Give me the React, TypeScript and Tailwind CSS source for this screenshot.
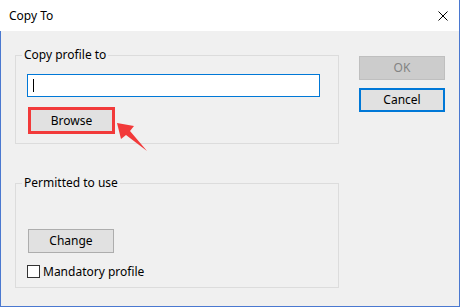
import React from "react";

export default function App() {
  return (
    <div
      className="relative w-[460px] h-[307px] bg-[#f0f0f0] flex flex-col border-r border-b border-[#4a78d0] text-[12px] text-black"
      style={{ fontFamily: '"Noto Sans", "Liberation Sans", sans-serif' }}
    >
      <div className="h-[31px] bg-white flex items-center justify-between pl-[9px] pr-[11px] shrink-0">
        <span className="leading-[16px]">Copy To</span>
        <svg width="10" height="10" viewBox="0 0 10 10">
          <path d="M0.5 0.5 L9.5 9.5 M9.5 0.5 L0.5 9.5" stroke="#000" strokeWidth="1" fill="none" />
        </svg>
      </div>
      <div className="flex-1 flex border-l border-[#4a78d0] pl-[14px] pt-[16px]">
        <div className="w-[324px] flex flex-col">
          <fieldset className="border border-[#dcdcdc] m-0 p-0">
            <legend className="ml-[6px] px-[2px] leading-[16px]">Copy profile to</legend>
            <div className="pl-[11px] pb-[9px] flex flex-col items-start">
              <div className="mt-[11px] w-[293px] h-[23px] border border-[#0078d7] bg-white flex items-center">
                <span className="ml-[5px] w-px h-[13px] bg-black" />
              </div>
              <button className="mt-[10px] ml-[1px] w-[87px] h-[27px] border-[3px] border-[#f23a3a] bg-[#e1e1e1] flex items-center justify-center leading-[16px]">
                Browse
              </button>
            </div>
          </fieldset>
          <fieldset className="mt-[31px] border border-[#dcdcdc] m-0 p-0">
            <legend className="ml-[6px] px-[2px] leading-[16px]">Permitted to use</legend>
            <div className="pl-[11px] pb-[9px] flex flex-col items-start">
              <button className="mt-[38px] ml-[1px] w-[86px] h-[24px] border border-[#adadad] bg-[#e1e1e1] flex items-center justify-center leading-[16px]">
                Change
              </button>
              <label className="mt-[12px] h-[13px] flex items-center">
                <span className="w-[13px] h-[13px] border border-[#333333] bg-white shrink-0" />
                <span className="ml-[3px] leading-[13px]">Mandatory profile</span>
              </label>
            </div>
          </fieldset>
        </div>
        <div className="ml-[20px] mt-[9px] flex flex-col gap-[8px]">
          <button className="w-[86px] h-[24px] border border-[#bfbfbf] bg-[#cccccc] text-[#838383] flex items-center justify-center leading-[16px]">
            OK
          </button>
          <button className="w-[86px] h-[24px] border-2 border-[#0078d7] bg-[#e1e1e1] flex items-center justify-center leading-[16px]">
            Cancel
          </button>
        </div>
      </div>
      <svg className="absolute left-0 top-0 pointer-events-none" width="460" height="307" viewBox="0 0 460 307">
        <polygon
          points="117,123 134,126 130,131 147,151 126,135 121,139"
          fill="#f23a3a"
        />
      </svg>
    </div>
  );
}
